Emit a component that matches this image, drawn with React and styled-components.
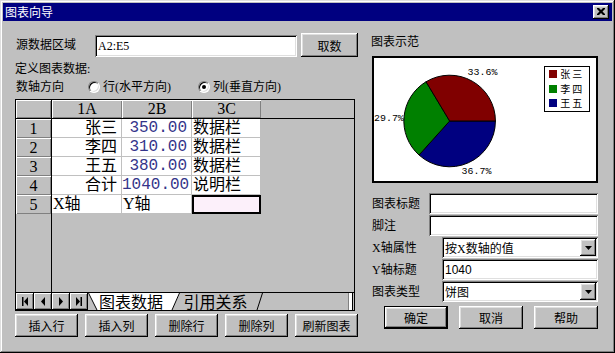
import React from 'react'
import styled, { createGlobalStyle } from 'styled-components'

const GlobalStyle = createGlobalStyle`
  html, body {
    margin: 0;
    padding: 0;
    background: #c0c0c0;
  }
  body {
    font-family: "Liberation Serif", "Noto Sans CJK SC", serif;
    font-size: 12px;
    color: #000;
  }
  * {
    box-sizing: border-box;
  }
`

const raised = `
  box-shadow: inset -1px -1px #000, inset 1px 1px #fff, inset -2px -2px #808080, inset 2px 2px #dfdfdf;
`
const sunken = `
  box-shadow: inset 1px 1px #808080, inset -1px -1px #fff, inset 2px 2px #000, inset -2px -2px #dfdfdf;
`
const headCell = `
  background: #c0c0c0;
  box-shadow: inset 1px 1px #fff, inset -1px -1px #808080;
`

const rows = [
  { n: 1, a: '张三', b: '350.00', c: '数据栏' },
  { n: 2, a: '李四', b: '310.00', c: '数据栏' },
  { n: 3, a: '王五', b: '380.00', c: '数据栏' },
  { n: 4, a: '合计', b: '1040.00', c: '说明栏' },
]

const legend = [
  { color: '#800000', name: '张三' },
  { color: '#008000', name: '李四' },
  { color: '#000080', name: '王五' },
]

function App() {
  return (
    <>
      <GlobalStyle />
      <Window>
        <TitleBar>
          <TitleText>图表向导</TitleText>
          <CloseButton>
            <svg width="8" height="7" viewBox="0 0 8 7">
              <path d="M0 0h2l2 2 2-2h2v1L5.5 3.5 8 6v1H6L4 5 2 7H0V6l2.5-2.5L0 1z" fill="#000" />
            </svg>
          </CloseButton>
        </TitleBar>

        <Body>
          <LeftColumn>
            <SourceRow>
              <Label $w={80}>源数据区域</Label>
              <Field $w={202} $h={22}>A2:E5</Field>
              <Button $w={57} $h={24} $ml={4}>取数</Button>
            </SourceRow>
            <TextLine $mt={5}>定义图表数据:</TextLine>
            <AxisRow>
              <Label $w={73}>数轴方向</Label>
              <RadioGroup>
                <RadioOption>
                  <Radio />
                  行(水平方向)
                </RadioOption>
                <RadioOption>
                  <Radio $checked />
                  列(垂直方向)
                </RadioOption>
              </RadioGroup>
            </AxisRow>

            <GridFrame>
              <Sheet>
                <RowHeaderColumn>
                  <Corner />
                  {[1, 2, 3, 4, 5].map(n => (
                    <RowNumber key={n}>{n}</RowNumber>
                  ))}
                </RowHeaderColumn>
                <DataArea>
                  <HeaderRow>
                    <ColHead $w={70}>1A</ColHead>
                    <ColHead $w={70}>2B</ColHead>
                    <ColHead $w={69}>3C</ColHead>
                  </HeaderRow>
                  {rows.map(r => (
                    <DataRow key={r.n}>
                      <Cell $w={70} $align="right">{r.a}</Cell>
                      <Cell $w={70} $align="right" $num>{r.b}</Cell>
                      <Cell $w={69} $align="left">{r.c}</Cell>
                    </DataRow>
                  ))}
                  <DataRow>
                    <Cell $w={70} $align="left">X轴</Cell>
                    <Cell $w={70} $align="left">Y轴</Cell>
                    <Cell $w={69} $align="left" $selected />
                  </DataRow>
                </DataArea>
              </Sheet>

              <TabBar>
                <NavButton>
                  <svg width="8" height="9" viewBox="0 0 8 9">
                    <rect x="1" y="0" width="1.5" height="9" fill="#000" />
                    <path d="M7 0L3 4.5 7 9z" fill="#000" />
                  </svg>
                </NavButton>
                <NavButton>
                  <svg width="8" height="9" viewBox="0 0 8 9">
                    <path d="M6 0L2 4.5 6 9z" fill="#000" />
                  </svg>
                </NavButton>
                <NavButton>
                  <svg width="8" height="9" viewBox="0 0 8 9">
                    <path d="M2 0L6 4.5 2 9z" fill="#000" />
                  </svg>
                </NavButton>
                <NavButton>
                  <svg width="8" height="9" viewBox="0 0 8 9">
                    <path d="M1 0L5 4.5 1 9z" fill="#000" />
                    <rect x="5.5" y="0" width="1.5" height="9" fill="#000" />
                  </svg>
                </NavButton>
                <SheetTab $w={92} $active $pad="0 6px 0 0">
                  <svg width="92" height="17" viewBox="0 0 92 17">
                    <polygon points="0,0 92,0 84,17 9,17" fill="#fff" />
                    <line x1="0.5" y1="0" x2="9" y2="17" stroke="#000" />
                    <line x1="84" y1="17" x2="91.5" y2="0" stroke="#000" />
                  </svg>
                  图表数据
                </SheetTab>
                <SheetTab $w={91} $overlap $pad="0 4px 0 0">
                  <svg width="91" height="17" viewBox="0 0 91 17">
                    <polygon points="8,0 91,0 85,17 0,17" fill="#c0c0c0" />
                    <line x1="85" y1="17" x2="90.5" y2="0" stroke="#000" />
                  </svg>
                  引用关系
                </SheetTab>
                <TabSpacer />
                <Splitter />
              </TabBar>
            </GridFrame>

            <ButtonRow $justify="space-between">
              <Button $w={63}>插入行</Button>
              <Button $w={63}>插入列</Button>
              <Button $w={63}>删除行</Button>
              <Button $w={63}>删除列</Button>
              <Button $w={63}>刷新图表</Button>
            </ButtonRow>
          </LeftColumn>

          <RightColumn>
            <TextLine $mt={2}>图表示范</TextLine>
            <ChartBox>
              <svg width="171" height="123" viewBox="0 0 171 123">
                <path d="M76 63 L122 63 A46 46 0 0 1 45.22 97.18 Z" fill="#000080" stroke="#000" />
                <path d="M76 63 L45.22 97.18 A46 46 0 0 1 52.31 23.57 Z" fill="#008000" stroke="#000" />
                <path d="M76 63 L52.31 23.57 A46 46 0 0 1 122 63 Z" fill="#800000" stroke="#000" />
                <ChartText x="94" y="17">33.6%</ChartText>
                <ChartText x="0" y="63">29.7%</ChartText>
                <ChartText x="88" y="116">36.7%</ChartText>
              </svg>
              <Legend>
                {legend.map(l => (
                  <LegendItem key={l.name}>
                    <Swatch $color={l.color} />
                    <LegendName>{l.name}</LegendName>
                  </LegendItem>
                ))}
              </Legend>
            </ChartBox>

            <Form>
              <FormRow>
                <Label $w={58}>图表标题</Label>
                <Field $h={21} />
              </FormRow>
              <FormRow>
                <Label $w={58}>脚注</Label>
                <Field $h={21} />
              </FormRow>
              <FormRow>
                <Label $w={71}>X轴属性</Label>
                <Field $h={21}>
                  按X数轴的值
                  <DropButton>
                    <svg width="7" height="4" viewBox="0 0 7 4">
                      <path d="M0 0h7L3.5 4z" fill="#000" />
                    </svg>
                  </DropButton>
                </Field>
              </FormRow>
              <FormRow>
                <Label $w={71}>Y轴标题</Label>
                <Field $h={21} $sans>1040</Field>
              </FormRow>
              <FormRow>
                <Label $w={71}>图表类型</Label>
                <Field $h={21}>
                  饼图
                  <DropButton>
                    <svg width="7" height="4" viewBox="0 0 7 4">
                      <path d="M0 0h7L3.5 4z" fill="#000" />
                    </svg>
                  </DropButton>
                </Field>
              </FormRow>
            </Form>

            <ButtonRow $justify="flex-end" $gap={11}>
              <Button $w={64} $default>确定</Button>
              <Button $w={64}>取消</Button>
              <Button $w={64}>帮助</Button>
            </ButtonRow>
          </RightColumn>
        </Body>
      </Window>
    </>
  )
}

export default App

const Window = styled.div`
  width: 615px;
  height: 353px;
  padding: 3px;
  background: #c0c0c0;
  box-shadow: inset -1px -1px #000, inset 1px 1px #dfdfdf, inset -2px -2px #808080, inset 2px 2px #fff;
  display: flex;
  flex-direction: column;
`
const TitleBar = styled.div`
  height: 18px;
  background: #000080;
  display: flex;
  align-items: center;
  justify-content: space-between;
  padding: 0 3px 0 2px;
`
const TitleText = styled.span`
  color: #fff;
  font-family: "Noto Sans CJK SC", sans-serif;
  font-size: 12px;
  line-height: 18px;
`
const CloseButton = styled.div`
  width: 16px;
  height: 14px;
  background: #c0c0c0;
  ${raised}
  display: flex;
  align-items: center;
  justify-content: center;
  padding-bottom: 1px;
`
const Body = styled.div`
  display: flex;
  gap: 13px;
  padding: 12px 14px 0 12px;
`
const LeftColumn = styled.div`
  width: 343px;
  display: flex;
  flex-direction: column;
`
const RightColumn = styled.div`
  flex: 1;
  display: flex;
  flex-direction: column;
`
const SourceRow = styled.div`
  display: flex;
  align-items: flex-end;
  height: 24px;
`
const Label = styled.div`
  width: ${p => p.$w}px;
  flex-shrink: 0;
  font-size: 12px;
  line-height: 21px;
  padding-left: 1px;
  white-space: nowrap;
  align-self: center;
`
const TextLine = styled.div`
  margin-top: ${p => p.$mt}px;
  height: 14px;
  font-size: 12px;
  line-height: 14px;
`
const AxisRow = styled.div`
  margin-top: 4px;
  height: 14px;
  display: flex;
  align-items: center;
`
const RadioGroup = styled.div`
  display: flex;
  align-items: center;
  gap: 27px;
`
const RadioOption = styled.label`
  display: flex;
  align-items: center;
  gap: 3px;
  font-size: 12px;
  line-height: 14px;
  white-space: nowrap;
`
const Radio = styled.span`
  width: 12px;
  height: 12px;
  border-radius: 50%;
  background: #fff;
  border: 1px solid;
  border-color: #808080 #fff #fff #808080;
  box-shadow: inset 1px 1px #000, inset -1px -1px #dfdfdf;
  display: flex;
  align-items: center;
  justify-content: center;
  &::after {
    content: '';
    width: 4px;
    height: 4px;
    border-radius: 50%;
    background: ${p => (p.$checked ? '#000' : 'transparent')};
  }
`
const Field = styled.div`
  width: ${p => (p.$w ? `${p.$w}px` : 'auto')};
  flex: ${p => (p.$w ? '0 0 auto' : '1')};
  height: ${p => p.$h}px;
  background: #fff;
  ${sunken}
  display: flex;
  align-items: center;
  padding: 0 2px 0 3px;
  font-family: ${p => (p.$sans ? '"Liberation Sans", sans-serif' : 'inherit')};
  font-size: 12px;
  white-space: nowrap;
`
const Button = styled.button`
  width: ${p => p.$w}px;
  height: ${p => p.$h || 23}px;
  margin-left: ${p => p.$ml || 0}px;
  flex-shrink: 0;
  border: none;
  padding: 0;
  background: #c0c0c0;
  font-family: "Noto Sans CJK SC", sans-serif;
  font-size: 12px;
  color: #000;
  ${p =>
    p.$default
      ? 'box-shadow: inset 0 0 0 1px #000, inset -2px -2px #000, inset 2px 2px #fff, inset -3px -3px #808080, inset 3px 3px #dfdfdf;'
      : raised}
`
const ButtonRow = styled.div`
  margin-top: 3px;
  display: flex;
  justify-content: ${p => p.$justify};
  gap: ${p => p.$gap || 0}px;
`
const GridFrame = styled.div`
  margin-top: 5px;
  width: 340px;
  height: 212px;
  border: 1px solid #000;
  background: #c0c0c0;
  display: flex;
  flex-direction: column;
`
const Sheet = styled.div`
  flex: 1;
  display: flex;
`
const RowHeaderColumn = styled.div`
  width: 36px;
  border-right: 1px solid #000;
  display: flex;
  flex-direction: column;
`
const Corner = styled.div`
  height: 19px;
  border-bottom: 1px solid #000;
  ${headCell}
`
const RowNumber = styled.div`
  height: 19px;
  ${headCell}
  font-family: "Liberation Serif", serif;
  font-size: 16px;
  line-height: 19px;
  text-align: center;
`
const DataArea = styled.div`
  flex: 1;
  display: flex;
  flex-direction: column;
`
const HeaderRow = styled.div`
  height: 19px;
  border-bottom: 1px solid #000;
  display: flex;
`
const ColHead = styled.div`
  width: ${p => p.$w}px;
  ${headCell}
  font-family: "Liberation Serif", serif;
  font-size: 16px;
  line-height: 18px;
  text-align: center;
`
const DataRow = styled.div`
  display: flex;
  height: 19px;
`
const Cell = styled.div`
  width: ${p => p.$w}px;
  height: 19px;
  background: ${p => (p.$selected ? '#fcf0fa' : '#fff')};
  border-right: 1px solid #c0c0c0;
  border-bottom: 1px solid #c0c0c0;
  ${p => p.$selected && 'border: 2px solid #000;'}
  font-family: ${p => (p.$num ? '"Liberation Mono", monospace' : '"Liberation Serif", "Noto Sans CJK SC", serif')};
  color: ${p => (p.$num ? '#34348a' : '#000')};
  font-size: 16px;
  line-height: 18px;
  text-align: ${p => p.$align};
  padding: ${p => (p.$align === 'right' ? '0 4px 0 0' : '0 0 0 1px')};
  white-space: nowrap;
  overflow: hidden;
`
const TabBar = styled.div`
  height: 18px;
  border-top: 1px solid #000;
  display: flex;
`
const NavButton = styled.div`
  width: 18px;
  height: 17px;
  background: #c0c0c0;
  box-shadow: inset -1px -1px #000, inset 1px 1px #fff, inset -2px -2px #808080;
  display: flex;
  align-items: center;
  justify-content: center;
`
const SheetTab = styled.div`
  position: relative;
  z-index: ${p => (p.$active ? 2 : 1)};
  width: ${p => p.$w}px;
  height: 17px;
  margin-left: ${p => (p.$overlap ? -8 : 0)}px;
  padding: ${p => p.$pad};
  display: flex;
  align-items: center;
  justify-content: center;
  font-family: "Noto Sans CJK SC", sans-serif;
  font-size: 16px;
  line-height: 17px;
  svg {
    position: absolute;
    left: 0;
    top: 0;
    z-index: -1;
  }
`
const TabSpacer = styled.div`
  flex: 1;
`
const Splitter = styled.div`
  width: 5px;
  height: 17px;
  margin-right: 1px;
  background: #fff;
  border-left: 1px solid #808080;
  border-right: 1px solid #000;
`
const ChartBox = styled.div`
  margin-top: 7px;
  margin-left: 1px;
  width: 226px;
  height: 127px;
  border: 2px solid #000;
  background: #fff;
  display: flex;
  justify-content: space-between;
  align-items: flex-start;
  overflow: hidden;
`
const ChartText = styled.text`
  font-family: "Liberation Mono", monospace;
  font-size: 10px;
  fill: #000;
`
const Legend = styled.div`
  margin: 8px 6px 0 0;
  width: 46px;
  border: 1px solid #000;
  padding: 0 0 0 4px;
  display: flex;
  flex-direction: column;
`
const LegendItem = styled.div`
  height: 14.5px;
  display: flex;
  align-items: center;
  gap: 3px;
`
const LegendName = styled.span`
  font-family: "Noto Sans CJK SC", sans-serif;
  font-size: 10px;
  line-height: 12px;
  letter-spacing: 2px;
  white-space: nowrap;
`
const Swatch = styled.span`
  width: 8px;
  height: 8px;
  flex-shrink: 0;
  background: ${p => p.$color};
`
const Form = styled.div`
  margin-top: 10px;
  display: flex;
  flex-direction: column;
`
const FormRow = styled.div`
  height: 22px;
  display: flex;
  align-items: flex-start;
`
const DropButton = styled.div`
  margin-left: auto;
  width: 16px;
  height: 17px;
  background: #c0c0c0;
  ${raised}
  display: flex;
  align-items: center;
  justify-content: center;
`
